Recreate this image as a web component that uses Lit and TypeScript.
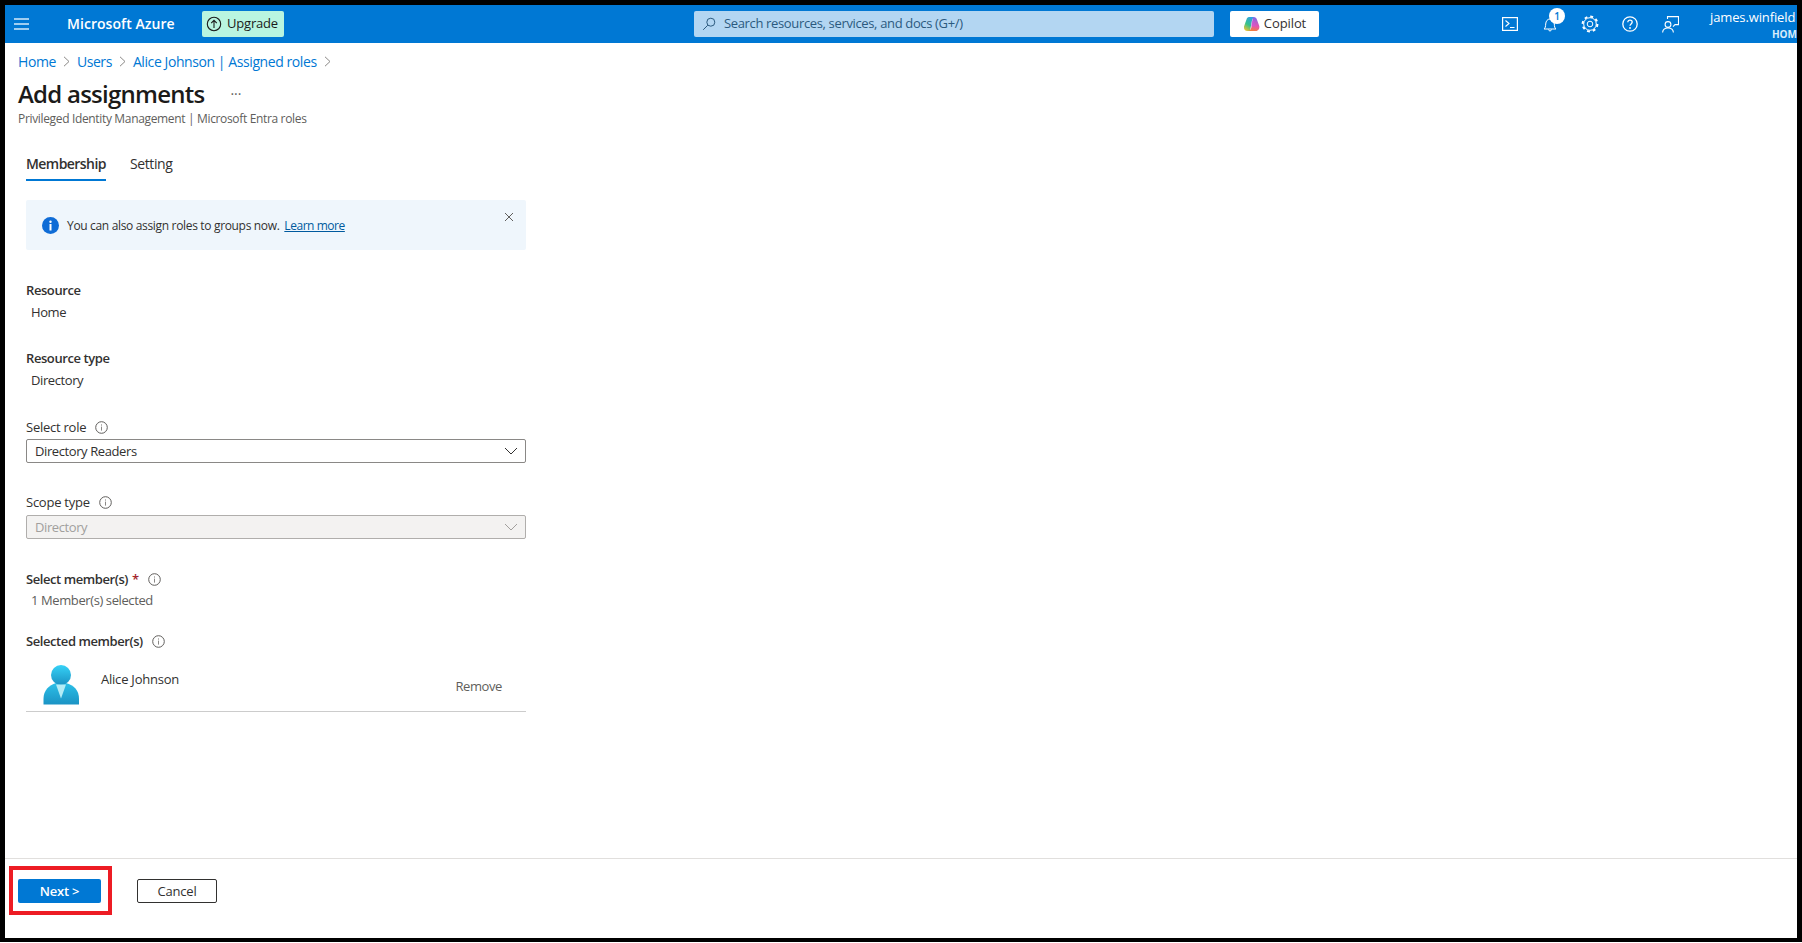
import { LitElement, html, css } from "lit";
import { customElement } from "lit/decorators.js";

const info = () => html`<svg class="i-info" width="13" height="13" viewBox="0 0 13 13"><circle cx="6.5" cy="6.5" r="5.8" fill="none" stroke="#605e5c" stroke-width="1"/><rect x="6" y="5.6" width="1" height="4" fill="#8a8886"/><rect x="6" y="3.4" width="1" height="1.2" fill="#8a8886"/></svg>`;
const chevron = (c: string) => html`<svg width="14" height="8" viewBox="0 0 14 8"><path d="M1 1l6 6 6-6" fill="none" stroke="${c}" stroke-width="1"/></svg>`;

@customElement("app-root")
export class AppRoot extends LitElement {
  static styles = css`
    :host { display: block; width: 1802px; height: 943px; background: #fff; font-family: "Open Sans", "Noto Sans", sans-serif; color: #323130; overflow: hidden; }
    .frame { box-sizing: border-box; width: 1802px; height: 942px; border: solid #000; border-width: 5px 5px 4px 5px; display: flex; flex-direction: column; background: #fff; position: relative; }
    .top { height: 38px; flex: none; background: #0078d4; display: flex; align-items: center; color: #fff; }
    .burger { margin-left: 9px; width: 15px; display: flex; flex-direction: column; gap: 3px; flex: none; }
    .burger span { height: 2px; background: #9fcdf0; display: block; }
    .brand { margin-left: 38px; width: 135px; font-size: 14px; font-weight: 600; letter-spacing: 0.05px; white-space: nowrap; flex: none; padding-bottom: 2px; box-sizing: border-box; }
    .upgrade { width: 82px; height: 26px; box-sizing: border-box; background: #b9f5e0; border-radius: 2px; color: #1b1b1b; display: flex; align-items: center; gap: 5px; padding-left: 4px; font-size: 13px; letter-spacing: -0.2px; flex: none; }
    .upgrade span, .search span, .copilot span { padding-bottom: 2px; }
    .search { margin-left: 410px; width: 520px; height: 26px; background: #b3d6f2; border-radius: 2px; display: flex; align-items: center; gap: 8px; padding-left: 8px; box-sizing: border-box; color: #2b5a7f; font-size: 13px; letter-spacing: -0.35px; flex: none; }
    .copilot { margin-left: 16px; width: 89px; height: 26px; background: #fff; border-radius: 2px; display: flex; align-items: center; justify-content: center; gap: 4px; color: #323130; font-size: 13px; font-weight: 500; letter-spacing: -0.1px; flex: none; }
    .icons { margin-left: 171px; display: flex; flex: none; }
    .ib { width: 40px; height: 38px; display: flex; align-items: center; justify-content: center; position: relative; }
    .badge { position: absolute; left: 19px; top: 3px; width: 16px; height: 16px; border-radius: 50%; background: #fff; color: #0078d4; font-size: 10px; font-weight: 600; display: flex; align-items: center; justify-content: center; }
    .user { flex: 1; min-width: 0; overflow: hidden; height: 38px; padding-left: 20px; }
    .user .nm { font-size: 13px; line-height: 16px; margin-top: 4px; white-space: nowrap; letter-spacing: -0.12px; }
    .user .org { font-size: 10px; font-weight: 700; line-height: 12px; margin-top: 3px; text-align: right; color: #d9ecfa; }

    .main { flex: 1; min-height: 0; padding-left: 13px; }
    .crumbs { margin-top: 8px; height: 20px; display: flex; align-items: center; font-size: 14px; color: #0078d4; letter-spacing: -0.42px; }
    .crumbs svg { margin: 0 7px; }
    .title { margin-top: 7px; height: 32px; line-height: 32px; font-size: 24px; font-weight: 600; color: #1b1a19; letter-spacing: -0.75px; display: flex; }
    .dots { margin-left: 26px; margin-top: 5px; font-size: 14px; font-weight: 400; color: #605e5c; line-height: 22px; letter-spacing: 0; }
    .sub { margin-top: 1px; font-size: 12px; line-height: 16px; color: #605e5c; letter-spacing: -0.34px; }
    .form { margin-left: 8px; width: 500px; }
    .tabs { margin-top: 23px; display: flex; gap: 24px; height: 31px; }
    .tab { font-size: 14px; line-height: 28px; height: 31px; box-sizing: border-box; letter-spacing: -0.38px; }
    .tab.on { border-bottom: 2px solid #0078d4; font-weight: 600; letter-spacing: -0.56px; }
    .banner { margin-top: 19px; height: 50px; background: #eff6fc; border-radius: 2px; display: flex; align-items: center; position: relative; padding-left: 16px; font-size: 12px; letter-spacing: -0.33px; gap: 8px; }
    .banner a { color: #005a9e; text-decoration: underline; margin-left: 2px; letter-spacing: -0.45px; }
    .close { position: absolute; right: 12px; top: 12px; }
    .lbl { font-size: 13px; line-height: 18px; height: 18px; font-weight: 600; color: #323130; display: flex; align-items: center; letter-spacing: -0.42px; white-space: nowrap; }
    .lbl.plain { font-weight: 500; letter-spacing: -0.25px; }
    .lbl .i-info { margin-left: 9px; }
    .val { font-size: 13px; line-height: 18px; height: 18px; padding-left: 5px; letter-spacing: -0.4px; }
    .star { color: #a4262c; margin-left: 4px; }
    .dd { height: 24px; box-sizing: border-box; border: 1px solid #8a8886; border-radius: 2px; display: flex; align-items: center; justify-content: space-between; padding: 0 7px 0 8px; font-size: 13px; letter-spacing: -0.4px; }
    .dd.off { background: #f3f2f1; border-color: #b0aeac; color: #a19f9d; }
    .mt3 { margin-top: 3px; }
    .mt4 { margin-top: 4px; }
    .mt28 { margin-top: 28px; }
    .mt29 { margin-top: 29px; }
    .mt30 { margin-top: 30px; }
    .mt31 { margin-top: 31px; }
    .mt23 { margin-top: 23px; }
    .muted { color: #605e5c; }
    .row { margin-top: 15px; height: 47px; box-sizing: border-box; border-bottom: 1px solid #ccc; display: flex; position: relative; }
    .row svg { margin-left: 17px; flex: none; }
    .row .nm { margin-left: 21px; margin-top: 5px; font-size: 13px; line-height: 18px; letter-spacing: -0.22px; }
    .row .rm { margin-left: auto; margin-right: 24px; margin-top: 12px; font-size: 13px; line-height: 18px; color: #605e5c; letter-spacing: -0.4px; }

    .foot { flex: none; height: 80px; box-sizing: border-box; border-top: 1px solid #e1dfdd; padding: 20px 0 0 13px; display: flex; gap: 36px; }
    .btn { height: 24px; box-sizing: border-box; border-radius: 2px; display: flex; align-items: center; justify-content: center; font-size: 13px; font-weight: 600; letter-spacing: -0.2px; }
    .next { width: 83px; background: #0078d4; color: #fff; }
    .cancel { width: 80px; border: 1px solid #323130; color: #323130; font-weight: 500; }
    .mark { position: absolute; left: 4px; top: 861px; width: 103px; height: 49px; box-sizing: border-box; border: 4px solid #ed1c24; }
  `;

  render() {
    const sep = html`<svg width="7" height="11" viewBox="0 0 7 11"><path d="M1 .8l5 4.7-5 4.7" fill="none" stroke="#8a8886" stroke-width="1"/></svg>`;
    return html`<div class="frame">
      <header class="top">
        <div class="burger"><span></span><span></span><span></span></div>
        <div class="brand">Microsoft Azure</div>
        <div class="upgrade">
          <svg width="16" height="16" viewBox="0 0 16 16"><circle cx="8" cy="8" r="6.7" fill="none" stroke="#1b1b1b" stroke-width="1.1"/><path d="M8 12V4.600M5.200 7.200L8 4.400l2.800 2.800" fill="none" stroke="#1b1b1b" stroke-width="1.1"/></svg>
          <span>Upgrade</span>
        </div>
        <div class="search">
          <svg width="14" height="14" viewBox="0 0 14 14"><circle cx="8.800" cy="5.200" r="4" fill="none" stroke="#2b5a7f" stroke-width="1"/><path d="M5.800 8.200L1.200 12.800" stroke="#2b5a7f" stroke-width="1"/></svg>
          <span>Search resources, services, and docs (G+/)</span>
        </div>
        <div class="copilot">
          <svg width="17" height="16" viewBox="0 0 17 16"><defs>
            <linearGradient id="cpA" x1="0.7" y1="0" x2="0.2" y2="1"><stop offset="0" stop-color="#2f9fe8"/><stop offset=".55" stop-color="#35c28c"/><stop offset="1" stop-color="#f2c230"/></linearGradient>
            <linearGradient id="cpB" x1="0.6" y1="0" x2="0.4" y2="1"><stop offset="0" stop-color="#7f6ae8"/><stop offset=".6" stop-color="#e455b0"/><stop offset="1" stop-color="#f2803a"/></linearGradient>
          </defs>
          <path d="M6 1h5.500C9.500 2 9 4 8.500 7L7 15H4.500C2 15 .5 13 1 10.500L3.500 3.500C3.900 2 4.700 1 6 1z" fill="url(#cpA)"/>
          <path d="M10.500 1c2 0 3 1 3.400 2.500l2.400 6.500c.5 2.500-1 5-3.500 5H4.500c2.500 0 3.700-2 4.200-5L9.300 5c.2-2 .5-4 1.200-4z" fill="url(#cpB)"/>
          <path d="M8.700 5.500c.6-1 2-1 2.600 0l1.700 5H8z" fill="#c65ae0" opacity=".55"/></svg>
          <span>Copilot</span>
        </div>
        <div class="icons">
          <div class="ib"><svg width="16" height="14" viewBox="0 0 16 14"><rect x=".6" y=".6" width="14.800" height="12.800" fill="none" stroke="#fff" stroke-width="1.200"/><path d="M3.500 3.500L7 6.500l-3.500 3M8 10.500h4.500" fill="none" stroke="#fff" stroke-width="1.100"/></svg></div>
          <div class="ib"><svg width="16" height="16" viewBox="0 0 16 16"><path d="M2 13c1.300-1 1.600-2.500 1.700-5C3.900 5 5.500 3 8 3s4.100 2 4.300 5c.1 2.500.4 4 1.700 5zM6.500 13.500c.2 1 .8 1.500 1.500 1.500s1.300-.5 1.500-1.500" fill="none" stroke="#fff" stroke-width="1"/></svg><span class="badge">1</span></div>
          <div class="ib"><svg width="18" height="18" viewBox="0 0 18 18"><circle cx="9" cy="9" r="2.800" fill="none" stroke="#fff" stroke-width="1"/><circle cx="9" cy="9" r="6.300" fill="none" stroke="#fff" stroke-width="1"/><circle cx="9" cy="9" r="7.400" fill="none" stroke="#fff" stroke-width="2" stroke-dasharray="2.900 2.910"/></svg></div>
          <div class="ib"><svg width="16" height="16" viewBox="0 0 16 16"><circle cx="8" cy="8" r="7.200" fill="none" stroke="#fff" stroke-width="1.300"/><path d="M5.800 6.200c0-1.300 1-2.100 2.200-2.100s2.200.8 2.200 2c0 1.800-2.200 1.800-2.200 3.700" fill="none" stroke="#fff" stroke-width="1.300"/><circle cx="8" cy="12" r=".9" fill="#fff"/></svg></div>
          <div class="ib"><svg width="17" height="17" viewBox="0 0 17 17"><circle cx="6" cy="8.500" r="2.900" fill="none" stroke="#fff" stroke-width="1.100"/><path d="M.6 16.500c.2-2.900 2.200-4.500 5.400-4.500s5.200 1.600 5.400 4.500M5.500 3V.6h11v8h-3.500l-2 2" fill="none" stroke="#fff" stroke-width="1.100"/></svg></div>
        </div>
        <div class="user"><div class="nm">james.winfield</div><div class="org">HOM</div></div>
      </header>
      <main class="main">
        <nav class="crumbs"><span>Home</span>${sep}<span>Users</span>${sep}<span>Alice Johnson | Assigned roles</span>${sep}</nav>
        <div class="title"><span>Add assignments</span><span class="dots">···</span></div>
        <div class="sub">Privileged Identity Management | Microsoft Entra roles</div>
        <div class="form">
          <div class="tabs"><div class="tab on">Membership</div><div class="tab">Setting</div></div>
          <div class="banner">
            <svg width="17" height="17" viewBox="0 0 17 17"><circle cx="8.500" cy="8.500" r="8.500" fill="#0f6cd6"/><rect x="7.500" y="7" width="2" height="6.500" fill="#fff"/><circle cx="8.500" cy="4.800" r="1.200" fill="#fff"/></svg>
            <span>You can also assign roles to groups now. <a>Learn more</a></span>
            <svg class="close" width="10" height="10" viewBox="0 0 10 10"><path d="M1 1l8 8M9 1l-8 8" stroke="#605e5c" stroke-width="1"/></svg>
          </div>
          <div class="lbl mt31">Resource</div>
          <div class="val mt4">Home</div>
          <div class="lbl mt28">Resource type</div>
          <div class="val mt4">Directory</div>
          <div class="lbl plain mt29">Select role ${info()}</div>
          <div class="dd mt3"><span>Directory Readers</span>${chevron("#323130")}</div>
          <div class="lbl plain mt30">Scope type ${info()}</div>
          <div class="dd off mt4"><span>Directory</span>${chevron("#a19f9d")}</div>
          <div class="lbl mt31">Select member(s)<span class="star">*</span> ${info()}</div>
          <div class="val mt3 muted">1 Member(s) selected</div>
          <div class="lbl mt23">Selected member(s) ${info()}</div>
          <div class="row">
            <svg width="37" height="40" viewBox="0 0 37 40"><defs>
              <linearGradient id="av" x1="0" y1="0" x2="0" y2="1"><stop offset="0" stop-color="#36d2f7"/><stop offset="1" stop-color="#1b93c4"/></linearGradient>
              <linearGradient id="avb" x1="0" y1="0" x2="0" y2="1"><stop offset="0" stop-color="#2cc0e8"/><stop offset="1" stop-color="#1b93c4"/></linearGradient>
            </defs>
              <path d="M.5 39.500V34C.5 25 6 20.500 13 18h10c8 2.500 13 7 13 16v5.500z" fill="url(#avb)"/>
              <circle cx="18" cy="10" r="10" fill="url(#av)"/>
              <path d="M13 19.500h10l-5 14z" fill="#b4ecf6"/>
            </svg>
            <div class="nm">Alice Johnson</div>
            <div class="rm">Remove</div>
          </div>
        </div>
      </main>
      <footer class="foot">
        <div class="btn next">Next &gt;</div>
        <div class="btn cancel">Cancel</div>
      </footer>
      <div class="mark"></div>
    </div>`;
  }
}
